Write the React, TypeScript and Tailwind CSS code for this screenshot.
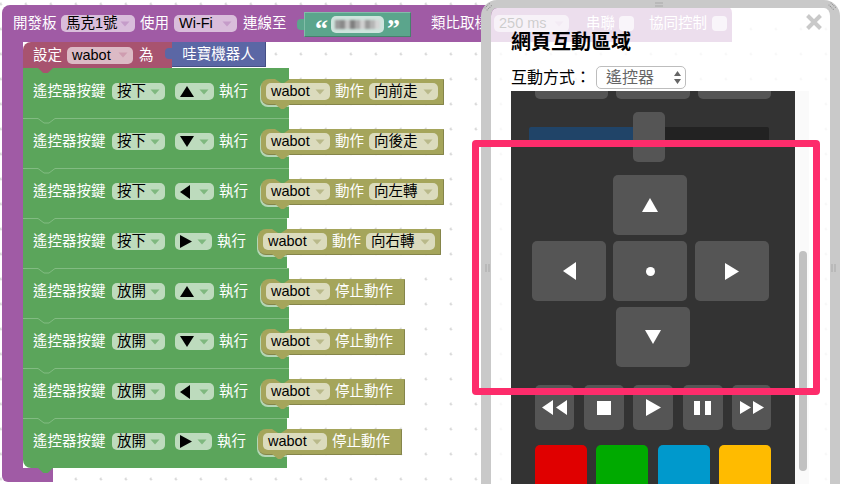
import React from "react";

const font = { fontFamily: '"Liberation Sans", "Noto Sans CJK TC", sans-serif' };
type Dir = "up" | "down" | "left" | "right";

function Pill({ text, arrow, className = "" }: { text: React.ReactNode; arrow: string; className?: string }) {
  return (
    <div className={`flex h-[17px] shrink-0 items-center justify-between rounded-[5px] bg-white/60 pl-[5px] pr-[5px] text-[14.5px] leading-none text-black ${className}`}>
      <span className="flex items-center">{text}</span>
      <svg width="10" height="6" viewBox="0 0 10 6" className="ml-[2px] shrink-0">
        <path d="M0.5 0.5H9.5L5 5.5Z" fill={arrow} />
      </svg>
    </div>
  );
}

function Tri({ dir, w, h, fill = "#fff" }: { dir: Dir; w: number; h: number; fill?: string }) {
  const p = { up: `${w / 2},0 ${w},${h} 0,${h}`, down: `0,0 ${w},0 ${w / 2},${h}`, left: `0,${h / 2} ${w},0 ${w},${h}`, right: `0,0 ${w},${h / 2} 0,${h}` }[dir];
  return (
    <svg width={w} height={h} viewBox={`0 0 ${w} ${h}`} className="shrink-0">
      <polygon points={p} fill={fill} />
    </svg>
  );
}

function Olive({ action }: { action?: string }) {
  return (
    <div className={`relative flex h-[26px] shrink-0 items-center rounded-l-[8px] rounded-r-[1px] border-r border-b border-[#85854a] bg-[#a5a55b] pl-[5px] shadow-[-1px_2px_0_rgba(255,255,255,0.55)] ${action ? "w-[183px]" : "w-[144px]"}`}>
      <div className="absolute left-[14px] top-0 h-[4px] w-[15px] bg-[#5ba55b] [clip-path:polygon(0_0,100%_0,60%_100%,40%_100%)]" />
      <div className="absolute left-[14px] top-[25px] h-[5px] w-[15px] bg-[#a5a55b] [clip-path:polygon(0_0,100%_0,60%_100%,40%_100%)]" />
      <Pill text="wabot" arrow="#b9b98a" className="w-[64px]" />
      <span className="ml-[5px] shrink-0 text-[14.5px] leading-none text-white">{action ? "動作" : "停止動作"}</span>
      {action && <Pill text={action} arrow="#b9b98a" className="ml-[5px] w-[69px]" />}
    </div>
  );
}

function Seam({ color }: { color: string }) {
  return (
    <svg className="absolute left-0 top-0 h-[7px] w-full">
      <polyline points="0,0.5 15,0.5 21,5 26,5 32,0.5 290,0.5" fill="none" stroke={color} strokeWidth="1" />
    </svg>
  );
}

function GreenRow({ mode, dir, action, last, first }: { mode: string; dir: Dir; action?: string; last?: boolean; first?: boolean }) {
  const glyph = {
    up: <Tri dir="up" w={14} h={11} fill="#000" />,
    down: <Tri dir="down" w={14} h={11} fill="#000" />,
    left: <Tri dir="left" w={10} h={14} fill="#000" />,
    right: <Tri dir="right" w={12} h={13} fill="#000" />,
  }[dir];
  const narrow = dir === "right";
  return (
    <div className={`relative flex h-[50px] items-start bg-[#5ba55b] pl-[10px] pt-[11px] text-[14.5px] leading-none text-white ${narrow ? "w-[264px]" : "w-[266px]"} ${last ? "rounded-bl-[8px]" : ""}`}>
      {!first && <Seam color="#82bb82" />}
      <span className="mt-[5px] w-[74px] shrink-0">遙控器按鍵</span>
      <Pill text={mode} arrow="#7fb87f" className="ml-[5px] mt-[4px] w-[53px]" />
      <Pill text={glyph} arrow="#7fb87f" className={`ml-[10px] mt-[4px] ${narrow ? "w-[37px]" : "w-[39px]"}`} />
      <span className="ml-[5px] mt-[5px] w-[29px] shrink-0">執行</span>
      <div className={narrow ? "ml-[12px] shrink-0" : "ml-[13px] shrink-0"}>
        <Olive action={action} />
      </div>
      {last && (
        <div className="absolute left-[15px] top-[50px] h-[5px] w-[15px] bg-[#5ba55b] [clip-path:polygon(0_0,100%_0,65%_100%,35%_100%)]" />
      )}
    </div>
  );
}

function Btn({ className = "", children }: { className?: string; children?: React.ReactNode }) {
  return <div className={`flex items-center justify-center rounded-[5px] bg-[#555] ${className}`}>{children}</div>;
}

function Dots({ className = "" }: { className?: string }) {
  return (
    <svg className={`absolute ${className}`} width="9" height="5" viewBox="0 0 9 5">
      {[0.5, 2.5, 4.5, 6.5].map((x) => [0.5, 3.5].map((y) => <rect key={`${x}-${y}`} x={x} y={y} width="1" height="1" fill="#8a8a8a" />))}
    </svg>
  );
}

export default function App() {
  const rows: [string, Dir, string?][] = [
    ["按下", "up", "向前走"],
    ["按下", "down", "向後走"],
    ["按下", "left", "向左轉"],
    ["按下", "right", "向右轉"],
    ["放開", "up"],
    ["放開", "down"],
    ["放開", "left"],
    ["放開", "right"],
  ];
  const mosaic = ["bg-[#9a9a9a]", "bg-[#8a8a8a]", "bg-[#c4c4c4]", "bg-[#7f7f7f]", "bg-[#a8a8a8]", "bg-[#cfcfcf]", "bg-[#999]", "bg-[#b5b5b5]", "bg-[#d5d5d5]"];
  return (
    <div style={font} className="relative h-[484px] w-[842px] overflow-hidden whitespace-nowrap bg-white">
      <svg className="absolute inset-0" width="842" height="484">
        <defs>
          <pattern id="grid" x="1" y="4" width="25" height="25" patternUnits="userSpaceOnUse">
            <path d="M-1.5 0H1.5M0 -1.5V1.5M23.5 0H25M0 23.5V25M23.5 25H25M25 23.5V25M25 0V1.5" stroke="#cfcfcf" strokeWidth="1" />
          </pattern>
        </defs>
        <rect width="842" height="484" fill="url(#grid)" />
      </svg>

      {/* Blockly blocks on the free canvas */}
      <div className="absolute left-[2px] top-[5px] w-[730px]">
        <div className="flex h-[37px] items-center rounded-t-[8px] bg-[#a05ba5] pl-[11px] text-[14.5px] leading-none text-white">
          <span className="w-[44px] shrink-0">開發板</span>
          <Pill text="馬克1號" arrow="#c59cc9" className="ml-[4px] w-[74px]" />
          <span className="ml-[5px] w-[29px] shrink-0">使用</span>
          <Pill text="Wi-Fi" arrow="#c59cc9" className="ml-[5px] w-[63px]" />
          <span className="ml-[6px] w-[44px] shrink-0">連線至</span>
          <div className="relative ml-[17px] mt-[2px] flex h-[25px] w-[107px] shrink-0 items-center justify-between border border-t-[#82bda8] border-l-[#82bda8] border-r-[#47806c] border-b-[#47806c] bg-[#5ba58c] px-[10px]">
            <div className="absolute -left-[8px] top-[6px] h-[11px] w-[7px] rounded-l-[4px] bg-[#5ba58c]" />
            <span className="mt-[9px] font-['Liberation_Serif'] text-[26px] font-bold leading-none">“</span>
            <div className="flex h-[17px] w-[53px] items-center justify-center rounded-[5px] bg-white/70">
              <div className="flex h-[9px] w-[45px] blur-[1px]">
                {mosaic.map((c, i) => (
                  <div key={i} className={`h-full w-[5px] ${c}`} />
                ))}
              </div>
            </div>
            <span className="mt-[9px] font-['Liberation_Serif'] text-[26px] font-bold leading-none">”</span>
          </div>
          <span className="ml-[20px] w-[58px] shrink-0">類比取樣</span>
          <Pill text="250 ms" arrow="#c59cc9" className="ml-[5px] w-[75px]" />
          <span className="ml-[17px] w-[29px] shrink-0">串聯</span>
          <div className="ml-[4px] h-[15px] w-[15px] shrink-0 rounded-[4px] bg-white/70" />
          <span className="ml-[15px] w-[58px] shrink-0">協同控制</span>
          <div className="ml-[5px] h-[15px] w-[15px] shrink-0 rounded-[4px] bg-white/70" />
        </div>
        <div className="flex items-start">
          <div className="w-[21px] shrink-0">
            <div className="h-[426px] bg-[#a05ba5]" />
            <div className="h-[14px] w-[51px] rounded-bl-[6px] bg-[#a05ba5]" />
          </div>
          <div className="flex flex-col">
            <div className="flex items-start">
              <div className="relative flex h-[26px] w-[149px] items-center rounded-tl-[8px] bg-[#a8536f] pl-[10px] text-[14.5px] leading-none text-white">
                <span className="w-[29px] shrink-0">設定</span>
                <Pill text="wabot" arrow="#cf9db0" className="ml-[5px] w-[66px]" />
                <span className="ml-[6px]">為</span>
                <div className="absolute left-[15px] top-[26px] z-10 h-[5px] w-[15px] bg-[#a8536f] [clip-path:polygon(0_0,100%_0,65%_100%,35%_100%)]" />
              </div>
              <div className="relative flex h-[25px] w-[94px] items-center justify-center border-r border-b border-[#454f85] bg-[#5b67a5] text-[14.5px] leading-none text-white">
                <div className="absolute -left-[7px] top-[6px] h-[11px] w-[7px] rounded-l-[4px] bg-[#5b67a5]" />
                哇寶機器人
              </div>
            </div>
            {rows.map(([m, d, a], i) => (
              <GreenRow key={i} mode={m} dir={d} action={a} first={i === 0} last={i === rows.length - 1} />
            ))}
          </div>
        </div>
      </div>

      {/* Floating window */}
      <div className="absolute left-[481px] top-0 h-[510px] w-[359px] rounded-[16px] border-x-[10px] border-t-[8px] border-[#c9c9c9] bg-white/80 bg-clip-padding">
        <Dots className="-left-[7px] -top-[4px] rotate-[-45deg]" />
        <Dots className="-right-[7px] -top-[4px] rotate-45" />
        <Dots className="left-[164px] -top-[6px]" />
        <Dots className="-left-[8px] top-[258px] rotate-90" />
        <Dots className="-right-[8px] top-[258px] rotate-90" />
        <div className="absolute right-[7px] top-[5px] text-[#c9c9c9]">
          <svg width="18" height="18" viewBox="0 0 18 18">
            <path d="M2.5 2.5L15.5 15.5M15.5 2.5L2.5 15.5" stroke="currentColor" strokeWidth="4" />
          </svg>
        </div>
        <div className="pl-[20px] pt-[20px]">
          <div className="h-[28px] text-[20px] font-bold leading-[28px] text-black">網頁互動區域</div>
          <div className="mt-[10px] flex h-[23px] items-center">
            <span className="w-[85px] text-[16px] leading-none text-black">互動方式：</span>
            <div className="flex h-[23px] w-[90px] items-center justify-between rounded-[5px] border border-[#bdbdbd] bg-white pl-[9px] pr-[3px] text-[16px] leading-none text-[#666]">
              <span>遙控器</span>
              <svg width="9" height="15" viewBox="0 0 9 15">
                <path d="M4.5 1L8 6H1ZM1 9H8L4.5 14Z" fill="#666" />
              </svg>
            </div>
          </div>
          <div className="mt-[2px] flex items-start">
            <div className="h-[393px] w-[284px] overflow-hidden bg-[#333]">
              <div className="ml-[24px] flex gap-[8px]">
                <div className="h-[8px] w-[73px] rounded-b-[5px] bg-[#555]" />
                <div className="h-[8px] w-[74px] rounded-b-[5px] bg-[#555]" />
                <div className="h-[8px] w-[73px] rounded-b-[5px] bg-[#555]" />
              </div>
              <div className="ml-[18px] mt-[13px] flex items-start">
                <div className="mt-[15px] h-[15px] w-[104px] rounded-l-[2px] bg-[#204468]" />
                <div className="h-[50px] w-[32px] rounded-[5px] bg-[#555]" />
                <div className="mt-[15px] h-[15px] w-[104px] rounded-r-[2px] bg-[#222]" />
              </div>
              <div className="ml-[102px] mt-[13px]">
                <Btn className="h-[60px] w-[74px]"><Tri dir="up" w={16} h={14} /></Btn>
              </div>
              <div className="ml-[21px] mt-[6px] flex">
                <Btn className="h-[60px] w-[74px]"><Tri dir="left" w={13} h={18} /></Btn>
                <Btn className="ml-[7px] h-[60px] w-[74px]">
                  <div className="h-[9px] w-[9px] rounded-full bg-white" />
                </Btn>
                <Btn className="ml-[8px] h-[60px] w-[74px]"><Tri dir="right" w={14} h={17} /></Btn>
              </div>
              <div className="ml-[105px] mt-[6px]">
                <Btn className="h-[60px] w-[74px]"><Tri dir="down" w={16} h={14} /></Btn>
              </div>
              <div className="ml-[24px] mt-[18px] flex w-[236px] justify-between">
                <Btn className="h-[45px] w-[39px]">
                  <svg width="25" height="15" viewBox="0 0 25 15"><path d="M0 7.5L11 0V15ZM14 7.5L25 0V15Z" fill="#fff" /></svg>
                </Btn>
                <Btn className="h-[45px] w-[40px]"><div className="h-[14px] w-[14px] bg-white" /></Btn>
                <Btn className="h-[45px] w-[40px]">
                  <svg width="15" height="17" viewBox="0 0 15 17"><path d="M0 0L15 8.5L0 17Z" fill="#fff" /></svg>
                </Btn>
                <Btn className="h-[45px] w-[40px] gap-[5px]">
                  <div className="h-[14px] w-[6px] bg-white" />
                  <div className="h-[14px] w-[6px] bg-white" />
                </Btn>
                <Btn className="h-[45px] w-[39px]">
                  <svg width="24" height="13" viewBox="0 0 24 13"><path d="M0 0L11 6.5L0 13ZM13 0L24 6.5L13 13Z" fill="#fff" /></svg>
                </Btn>
              </div>
              <div className="ml-[24px] mt-[15px] flex w-[236px] justify-between">
                <div className="h-[60px] w-[52px] rounded-[5px] bg-[#e00000]" />
                <div className="h-[60px] w-[52px] rounded-[5px] bg-[#00aa00]" />
                <div className="h-[60px] w-[52px] rounded-[5px] bg-[#0099cc]" />
                <div className="h-[60px] w-[52px] rounded-[5px] bg-[#ffbb00]" />
              </div>
            </div>
            <div className="h-[393px] w-[14px] bg-[#fafafa] pl-[4px] pt-[160px]">
              <div className="h-[220px] w-[8px] rounded-full bg-[#c1c1c1]" />
            </div>
          </div>
        </div>
      </div>

      {/* Highlight frame */}
      <div className="absolute left-[472px] top-[140px] h-[255px] w-[348px] rounded-[4px] border-[7px] border-[#fd2c6b]" />
    </div>
  );
}
